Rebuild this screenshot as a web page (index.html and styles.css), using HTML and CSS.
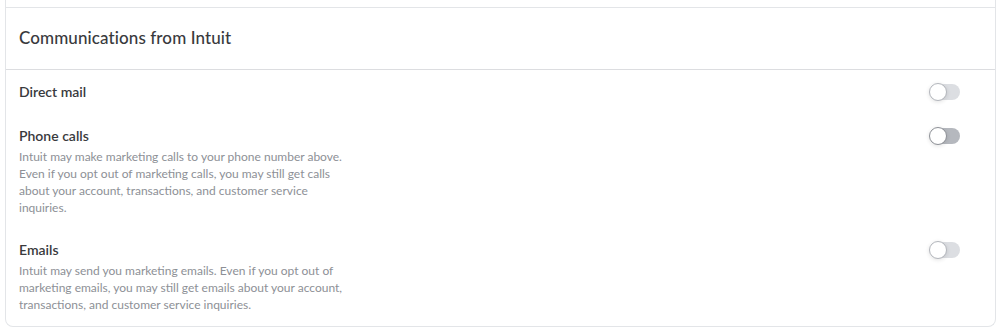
FILE: index.html
```html
<!DOCTYPE html>
<html lang="en">
  <head>
    <meta charset="UTF-8">
    <title>Communications from Intuit</title>
    <link rel="stylesheet" href="styles.css">
  </head>
  <body>
    <div class="card">
      <div class="card-prev"></div>

      <div class="card-header">
        <h2>Communications from Intuit</h2>
      </div>

      <div class="pref-row">
        <div class="pref-text">
          <div class="pref-title">Direct mail</div>
        </div>
        <span class="toggle"></span>
      </div>

      <div class="pref-row">
        <div class="pref-text">
          <div class="pref-title">Phone calls</div>
          <p class="pref-desc">Intuit may make marketing calls to your phone number above. Even if you opt out of marketing calls, you may still get calls about your account, transactions, and customer service inquiries.</p>
        </div>
        <span class="toggle hover"></span>
      </div>

      <div class="pref-row">
        <div class="pref-text">
          <div class="pref-title">Emails</div>
          <p class="pref-desc">Intuit may send you marketing emails. Even if you opt out of marketing emails, you may still get emails about your account, transactions, and customer service inquiries.</p>
        </div>
        <span class="toggle"></span>
      </div>
    </div>
  </body>
</html>
```

FILE: styles.css
```css
/* Page */
body {
  margin: 0;
  padding: 0 3px 0 5px;
  background-color: #fff;
  font-family: "Lato", "Open Sans", sans-serif;
  color: #393a3d;
}

/* Card */
.card {
  border: 1px solid #e3e5e8;
  border-top: none;
  border-radius: 0 0 8px 8px;
  background-color: #fff;
  padding-bottom: 1px;
}

.card-prev {
  height: 7px;
  border-bottom: 1px solid #e3e5e8;
}

.card-header {
  display: flex;
  align-items: center;
  height: 58px;
  padding: 0 13px 3px;
  border-bottom: 1px solid #dcdde0;
}

.card-header h2 {
  margin: 0;
  font-size: 17px;
  font-weight: 500;
  letter-spacing: 0.1px;
}

/* Preference rows */
.pref-row {
  display: flex;
  justify-content: space-between;
  align-items: flex-start;
  padding: 12px 35px 12px 13px;
}

.pref-title {
  font-size: 14px;
  font-weight: 600;
  line-height: 20px;
}

.pref-desc {
  margin: 2px 0 0;
  max-width: 335px;
  font-size: 12px;
  line-height: 17px;
  color: #8d9096;
}

/* Toggle switch */
.toggle {
  position: relative;
  display: inline-block;
  width: 30px;
  height: 16px;
  margin-top: 2px;
  border-radius: 8px;
  background-color: #dcdee2;
}

.toggle::before {
  content: "";
  position: absolute;
  top: -1px;
  left: -1px;
  width: 16px;
  height: 16px;
  border: 1px solid #b3b6bc;
  border-radius: 50%;
  background-color: #fff;
  box-shadow: 0 1px 4px rgba(0, 0, 0, 0.12);
}

.toggle.hover {
  background-color: #b5b8be;
}

.toggle.hover::before {
  border-color: #8d9096;
}
```
